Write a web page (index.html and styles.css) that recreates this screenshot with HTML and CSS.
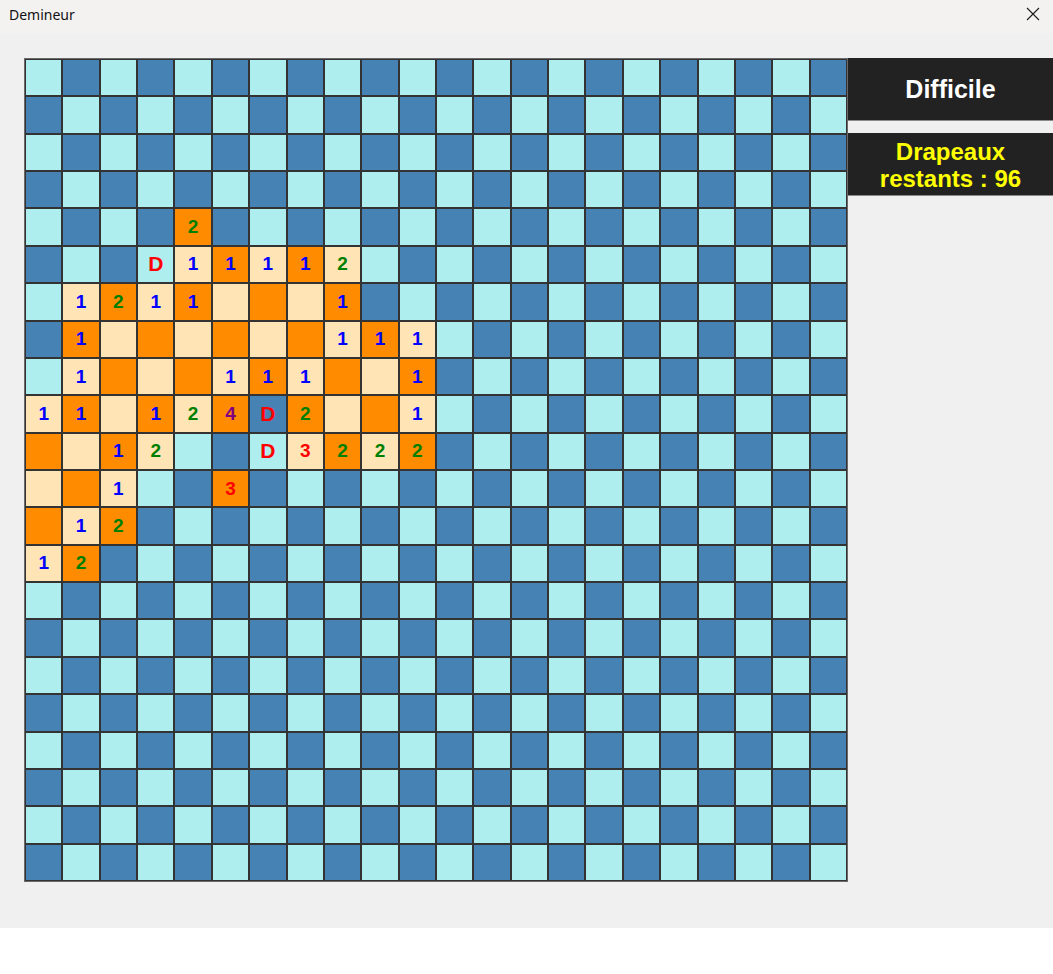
FILE: index.html
```html
<!DOCTYPE html>
<html lang="fr">
<head>
<meta charset="utf-8">
<title>Demineur</title>
<link rel="stylesheet" href="styles.css">
</head>
<body>
<div class="window">
  <div class="titlebar">
    <span class="title">Demineur</span>
    <svg class="close" width="14" height="14" viewBox="0 0 14 14"><path d="M1 1 L13 13 M13 1 L1 13" stroke="#1a1a1a" stroke-width="1.1" fill="none"/></svg>
  </div>
  <div class="content">
    <div class="board">
      <i class="c"></i><i class="b"></i><i class="c"></i><i class="b"></i><i class="c"></i><i class="b"></i><i class="c"></i><i class="b"></i><i class="c"></i><i class="b"></i><i class="c"></i><i class="b"></i><i class="c"></i><i class="b"></i><i class="c"></i><i class="b"></i><i class="c"></i><i class="b"></i><i class="c"></i><i class="b"></i><i class="c"></i><i class="b"></i>
      <i class="b"></i><i class="c"></i><i class="b"></i><i class="c"></i><i class="b"></i><i class="c"></i><i class="b"></i><i class="c"></i><i class="b"></i><i class="c"></i><i class="b"></i><i class="c"></i><i class="b"></i><i class="c"></i><i class="b"></i><i class="c"></i><i class="b"></i><i class="c"></i><i class="b"></i><i class="c"></i><i class="b"></i><i class="c"></i>
      <i class="c"></i><i class="b"></i><i class="c"></i><i class="b"></i><i class="c"></i><i class="b"></i><i class="c"></i><i class="b"></i><i class="c"></i><i class="b"></i><i class="c"></i><i class="b"></i><i class="c"></i><i class="b"></i><i class="c"></i><i class="b"></i><i class="c"></i><i class="b"></i><i class="c"></i><i class="b"></i><i class="c"></i><i class="b"></i>
      <i class="b"></i><i class="c"></i><i class="b"></i><i class="c"></i><i class="b"></i><i class="c"></i><i class="b"></i><i class="c"></i><i class="b"></i><i class="c"></i><i class="b"></i><i class="c"></i><i class="b"></i><i class="c"></i><i class="b"></i><i class="c"></i><i class="b"></i><i class="c"></i><i class="b"></i><i class="c"></i><i class="b"></i><i class="c"></i>
      <i class="c"></i><i class="b"></i><i class="c"></i><i class="b"></i><i class="o n2">2</i><i class="b"></i><i class="c"></i><i class="b"></i><i class="c"></i><i class="b"></i><i class="c"></i><i class="b"></i><i class="c"></i><i class="b"></i><i class="c"></i><i class="b"></i><i class="c"></i><i class="b"></i><i class="c"></i><i class="b"></i><i class="c"></i><i class="b"></i>
      <i class="b"></i><i class="c"></i><i class="b"></i><i class="c f">D</i><i class="m n1">1</i><i class="o n1">1</i><i class="m n1">1</i><i class="o n1">1</i><i class="m n2">2</i><i class="c"></i><i class="b"></i><i class="c"></i><i class="b"></i><i class="c"></i><i class="b"></i><i class="c"></i><i class="b"></i><i class="c"></i><i class="b"></i><i class="c"></i><i class="b"></i><i class="c"></i>
      <i class="c"></i><i class="m n1">1</i><i class="o n2">2</i><i class="m n1">1</i><i class="o n1">1</i><i class="m"></i><i class="o"></i><i class="m"></i><i class="o n1">1</i><i class="b"></i><i class="c"></i><i class="b"></i><i class="c"></i><i class="b"></i><i class="c"></i><i class="b"></i><i class="c"></i><i class="b"></i><i class="c"></i><i class="b"></i><i class="c"></i><i class="b"></i>
      <i class="b"></i><i class="o n1">1</i><i class="m"></i><i class="o"></i><i class="m"></i><i class="o"></i><i class="m"></i><i class="o"></i><i class="m n1">1</i><i class="o n1">1</i><i class="m n1">1</i><i class="c"></i><i class="b"></i><i class="c"></i><i class="b"></i><i class="c"></i><i class="b"></i><i class="c"></i><i class="b"></i><i class="c"></i><i class="b"></i><i class="c"></i>
      <i class="c"></i><i class="m n1">1</i><i class="o"></i><i class="m"></i><i class="o"></i><i class="m n1">1</i><i class="o n1">1</i><i class="m n1">1</i><i class="o"></i><i class="m"></i><i class="o n1">1</i><i class="b"></i><i class="c"></i><i class="b"></i><i class="c"></i><i class="b"></i><i class="c"></i><i class="b"></i><i class="c"></i><i class="b"></i><i class="c"></i><i class="b"></i>
      <i class="m n1">1</i><i class="o n1">1</i><i class="m"></i><i class="o n1">1</i><i class="m n2">2</i><i class="o n4">4</i><i class="b f">D</i><i class="o n2">2</i><i class="m"></i><i class="o"></i><i class="m n1">1</i><i class="c"></i><i class="b"></i><i class="c"></i><i class="b"></i><i class="c"></i><i class="b"></i><i class="c"></i><i class="b"></i><i class="c"></i><i class="b"></i><i class="c"></i>
      <i class="o"></i><i class="m"></i><i class="o n1">1</i><i class="m n2">2</i><i class="c"></i><i class="b"></i><i class="c f">D</i><i class="m n3">3</i><i class="o n2">2</i><i class="m n2">2</i><i class="o n2">2</i><i class="b"></i><i class="c"></i><i class="b"></i><i class="c"></i><i class="b"></i><i class="c"></i><i class="b"></i><i class="c"></i><i class="b"></i><i class="c"></i><i class="b"></i>
      <i class="m"></i><i class="o"></i><i class="m n1">1</i><i class="c"></i><i class="b"></i><i class="o n3">3</i><i class="b"></i><i class="c"></i><i class="b"></i><i class="c"></i><i class="b"></i><i class="c"></i><i class="b"></i><i class="c"></i><i class="b"></i><i class="c"></i><i class="b"></i><i class="c"></i><i class="b"></i><i class="c"></i><i class="b"></i><i class="c"></i>
      <i class="o"></i><i class="m n1">1</i><i class="o n2">2</i><i class="b"></i><i class="c"></i><i class="b"></i><i class="c"></i><i class="b"></i><i class="c"></i><i class="b"></i><i class="c"></i><i class="b"></i><i class="c"></i><i class="b"></i><i class="c"></i><i class="b"></i><i class="c"></i><i class="b"></i><i class="c"></i><i class="b"></i><i class="c"></i><i class="b"></i>
      <i class="m n1">1</i><i class="o n2">2</i><i class="b"></i><i class="c"></i><i class="b"></i><i class="c"></i><i class="b"></i><i class="c"></i><i class="b"></i><i class="c"></i><i class="b"></i><i class="c"></i><i class="b"></i><i class="c"></i><i class="b"></i><i class="c"></i><i class="b"></i><i class="c"></i><i class="b"></i><i class="c"></i><i class="b"></i><i class="c"></i>
      <i class="c"></i><i class="b"></i><i class="c"></i><i class="b"></i><i class="c"></i><i class="b"></i><i class="c"></i><i class="b"></i><i class="c"></i><i class="b"></i><i class="c"></i><i class="b"></i><i class="c"></i><i class="b"></i><i class="c"></i><i class="b"></i><i class="c"></i><i class="b"></i><i class="c"></i><i class="b"></i><i class="c"></i><i class="b"></i>
      <i class="b"></i><i class="c"></i><i class="b"></i><i class="c"></i><i class="b"></i><i class="c"></i><i class="b"></i><i class="c"></i><i class="b"></i><i class="c"></i><i class="b"></i><i class="c"></i><i class="b"></i><i class="c"></i><i class="b"></i><i class="c"></i><i class="b"></i><i class="c"></i><i class="b"></i><i class="c"></i><i class="b"></i><i class="c"></i>
      <i class="c"></i><i class="b"></i><i class="c"></i><i class="b"></i><i class="c"></i><i class="b"></i><i class="c"></i><i class="b"></i><i class="c"></i><i class="b"></i><i class="c"></i><i class="b"></i><i class="c"></i><i class="b"></i><i class="c"></i><i class="b"></i><i class="c"></i><i class="b"></i><i class="c"></i><i class="b"></i><i class="c"></i><i class="b"></i>
      <i class="b"></i><i class="c"></i><i class="b"></i><i class="c"></i><i class="b"></i><i class="c"></i><i class="b"></i><i class="c"></i><i class="b"></i><i class="c"></i><i class="b"></i><i class="c"></i><i class="b"></i><i class="c"></i><i class="b"></i><i class="c"></i><i class="b"></i><i class="c"></i><i class="b"></i><i class="c"></i><i class="b"></i><i class="c"></i>
      <i class="c"></i><i class="b"></i><i class="c"></i><i class="b"></i><i class="c"></i><i class="b"></i><i class="c"></i><i class="b"></i><i class="c"></i><i class="b"></i><i class="c"></i><i class="b"></i><i class="c"></i><i class="b"></i><i class="c"></i><i class="b"></i><i class="c"></i><i class="b"></i><i class="c"></i><i class="b"></i><i class="c"></i><i class="b"></i>
      <i class="b"></i><i class="c"></i><i class="b"></i><i class="c"></i><i class="b"></i><i class="c"></i><i class="b"></i><i class="c"></i><i class="b"></i><i class="c"></i><i class="b"></i><i class="c"></i><i class="b"></i><i class="c"></i><i class="b"></i><i class="c"></i><i class="b"></i><i class="c"></i><i class="b"></i><i class="c"></i><i class="b"></i><i class="c"></i>
      <i class="c"></i><i class="b"></i><i class="c"></i><i class="b"></i><i class="c"></i><i class="b"></i><i class="c"></i><i class="b"></i><i class="c"></i><i class="b"></i><i class="c"></i><i class="b"></i><i class="c"></i><i class="b"></i><i class="c"></i><i class="b"></i><i class="c"></i><i class="b"></i><i class="c"></i><i class="b"></i><i class="c"></i><i class="b"></i>
      <i class="b"></i><i class="c"></i><i class="b"></i><i class="c"></i><i class="b"></i><i class="c"></i><i class="b"></i><i class="c"></i><i class="b"></i><i class="c"></i><i class="b"></i><i class="c"></i><i class="b"></i><i class="c"></i><i class="b"></i><i class="c"></i><i class="b"></i><i class="c"></i><i class="b"></i><i class="c"></i><i class="b"></i><i class="c"></i>
    </div>
    <div class="panel">
      <div class="box level">Difficile</div>
      <div class="box flags">Drapeaux<br>restants : 96</div>
    </div>
  </div>
</div>
</body>
</html>
```
FILE: styles.css
```css
html, body {
  margin: 0;
  padding: 0;
  background: #ffffff;
}
.window {
  width: 1053px;
}
.titlebar {
  height: 33px;
  background: #f3f2f1;
  display: flex;
  align-items: center;
  justify-content: space-between;
  padding: 0 13px 0 9px;
  box-sizing: border-box;
  font-family: "Noto Sans", "Open Sans", sans-serif;
  font-size: 14px;
  color: #111;
}
.title {
  margin-top: -5px;
}
.close {
  margin-top: -5px;
  display: block;
}
.content {
  height: 895px;
  background: #f0f0f0;
  padding: 25px 0 0 24px;
  box-sizing: border-box;
  display: flex;
  align-items: flex-start;
}
.board {
  width: 824px;
  height: 824px;
  box-sizing: border-box;
  border: 1px solid #6a6a6a;
  display: grid;
  grid-template-columns: repeat(22, 1fr);
  grid-template-rows: repeat(22, 1fr);
  flex: none;
}
.board i {
  font-style: normal;
  border: 1px solid #333333;
  display: flex;
  align-items: center;
  justify-content: center;
  font-family: "Liberation Sans", Arial, sans-serif;
  font-weight: bold;
  font-size: 19px;
  min-width: 0;
  min-height: 0;
}
.c { background: #afeeee; }
.b { background: #4682b4; }
.o { background: #ff8c00; }
.m { background: #ffe4b5; }
.n1 { color: #0000ff; }
.n2 { color: #008000; }
.n3 { color: #ff0000; }
.n4 { color: #800080; }
.board i.f { color: #ff0000; font-size: 21px; }
.panel {
  flex: 1;
  display: flex;
  flex-direction: column;
  gap: 12px;
}
.box {
  background: #222222;
  border-bottom: 1px solid #8a8a8a;
  display: flex;
  align-items: center;
  justify-content: center;
  text-align: center;
  font-family: "Liberation Sans", Arial, sans-serif;
  font-weight: bold;
}
.level {
  height: 62px;
  color: #ffffff;
  font-size: 25px;
}
.flags {
  height: 63px;
  color: #ffff00;
  font-size: 24px;
  line-height: 27px;
  padding-top: 1px;
  box-sizing: border-box;
}
```
